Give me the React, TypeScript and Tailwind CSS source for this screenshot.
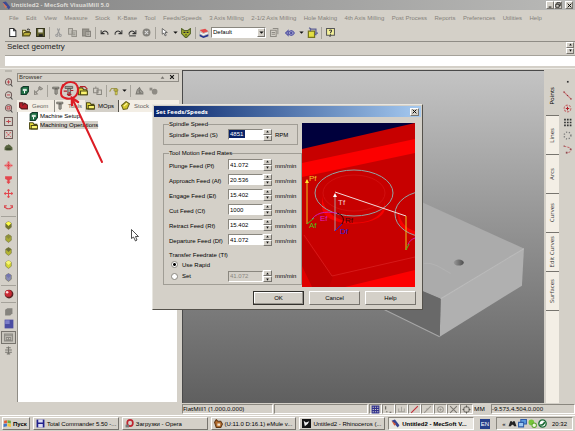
import type { ReactNode } from "react";

const raised = "border border-t-white border-l-white border-r-[#77746e] border-b-[#77746e]";
const sunken = "border border-t-[#8a877f] border-l-[#8a877f] border-r-white border-b-white";

const menus = [
  "File", "Edit", "View", "Measure", "Stock", "K-Base", "Tool", "Feeds/Speeds", "3 Axis Milling", "2-1/2 Axis Milling",
  "Hole Making", "4th Axis Milling", "Post Process", "Reports", "Preferences", "Utilities", "Help",
];

const feeds = [
  { id: "pf", label: "Plunge Feed (Pf)", value: "41.072" },
  { id: "af", label: "Approach Feed (Af)", value: "20.536" },
  { id: "ef", label: "Engage Feed (Ef)", value: "15.402" },
  { id: "cf", label: "Cut Feed (Cf)", value: "1000" },
  { id: "rf", label: "Retract Feed (Rf)", value: "15.402" },
  { id: "df", label: "Departure Feed (Df)", value: "41.072" },
];

function Icon({ children, className = "size-[9px]" }: { children: ReactNode; className?: string }) {
  return (
    <svg viewBox="0 0 16 16" fill="none" strokeWidth="1.8" className={`shrink-0 ${className}`} aria-hidden="true">
      {children}
    </svg>
  );
}

function ToolButton({ label, children, className = "w-[14px]" }: { label: string; children: ReactNode; className?: string }) {
  return (
    <button type="button" aria-label={label} className={`flex shrink-0 items-center justify-center ${className}`}>
      {children}
    </button>
  );
}

function Separator() {
  return <span className="mr-px ml-[2px] h-3 w-px shrink-0 bg-[#a5a29a]" />;
}

function Caret() {
  return <Icon className="size-[5px]"><path d="M1 5h14l-7 7z" fill="#111" /></Icon>;
}

const undoPath = <path d="M2 4v6h6M3 10c3-6 8-6 11-1v3" />;
const redoPath = <path d="M14 4v6H8M13 10C10 4 5 4 2 9v3" />;

function MainToolbar() {
  return (
    <div className="flex h-[16px] items-center pl-[5px]">
      <ToolButton label="New"><Icon><path d="M3 1h7l4 4v10H3z" fill="#fff" stroke="#333" /><path d="M10 1v4h4" stroke="#333" /></Icon></ToolButton>
      <ToolButton label="Open"><Icon><path d="M1 14V4h5l1 2h6v3" fill="#f3e98a" stroke="#55501c" /><path d="M1 14 4 8h12l-3 6z" fill="#b8ac38" stroke="#55501c" /><path d="M9 3c2-2 4-1 5 1" stroke="#333" /></Icon></ToolButton>
      <ToolButton label="Save"><Icon><path d="M1 1h14v14H1z" fill="#65642f" stroke="#33331c" /><path d="M4 2h8v6H4z" fill="#dddbd0" /><path d="M5 11h7v4H5z" fill="#222" /></Icon></ToolButton>
      <Separator />
      <ToolButton label="Cut"><Icon><path d="M6 1l4 10M10 1 6 11" stroke="#999" /><circle cx="5" cy="13" r="2" stroke="#999" /><circle cx="11" cy="13" r="2" stroke="#999" /></Icon></ToolButton>
      <ToolButton label="Copy"><Icon><path d="M1 1h7v10H1zM7 5h8v10H7z" fill="#c7c4bc" stroke="#949189" /><path d="M9 9h4M9 12h4" stroke="#949189" /></Icon></ToolButton>
      <ToolButton label="Paste"><Icon><path d="M1 2h11v12H1z" fill="#9a978f" stroke="#85827b" /><path d="M7 6h8v9H7z" fill="#c7c4bc" stroke="#85827b" /><path d="M9 9h4M9 12h4" stroke="#85827b" /></Icon></ToolButton>
      <Separator />
      <ToolButton label="Undo"><Icon><g stroke="#333">{undoPath}</g></Icon></ToolButton>
      <ToolButton label="Redo"><Icon><g stroke="#333">{redoPath}</g></Icon></ToolButton>
      <ToolButton label="Repeat"><Icon><g stroke="#333">{redoPath}<path d="M2 14h12" /></g></Icon></ToolButton>
      <ToolButton label="Stop"><Icon><circle cx="8" cy="8" r="7" fill="#85837d" /><path d="m5 5 6 6M11 5l-6 6" stroke="#ddd" /></Icon></ToolButton>
      <Separator />
      <ToolButton label="Pick"><Icon><path d="M4 1v10l3-2 2 5 2-1-2-5h4z" fill="#fff" stroke="#444" strokeWidth="1.3" /></Icon></ToolButton>
      <ToolButton label="Pick options" className="w-[8px]"><Caret /></ToolButton>
      <ToolButton label="Filter"><Icon className="size-[10px]"><path d="M1 1l4 3h6l4-3v8l-6 6H7L1 9z" fill="#a9b32c" stroke="#55652a" /><path d="M4 7h3M9 7h3M8 10v2" stroke="#223" /></Icon></ToolButton>
      <Separator />
      <ToolButton label="Layers"><Icon className="size-[10px]"><path d="M1 3l9-2 5 4-8 3z" fill="#e34b4b" /><path d="M1 6l6 3 8-3v3l-8 3-6-3z" fill="#fff" stroke="#888" strokeWidth=".6" /><path d="M1 10l6 3 8-3v3l-8 3-6-3z" fill="#26348e" /></Icon></ToolButton>
      <div className={`relative flex h-[11px] w-[55px] shrink-0 bg-white ${sunken}`}>
        <select aria-label="Layer" className="w-full appearance-none bg-transparent pl-px text-[6px] leading-[9px] text-black outline-none">
          <option>Default</option>
        </select>
        <span className={`pointer-events-none absolute inset-y-0 right-0 flex w-[8px] items-center justify-center bg-[#d4d0c8] ${raised}`}><Caret /></span>
      </div>
      <ToolButton label="Properties" className="w-[16px]"><Icon><path d="M1 4h10v11H1z" stroke="#8e8b84" /><path d="M5 1h9v10M3 8h6M3 11h6" stroke="#8e8b84" /></Icon></ToolButton>
      <ToolButton label="Show" className="w-[16px]"><Icon className="size-[10px]"><path d="M1 8l4-4v8zM5 8c3-5 7-5 10 0-3 5-7 5-10 0z" fill="#b4b5d9" stroke="#5a5aa5" /><circle cx="10" cy="8" r="2" fill="#5050a0" /></Icon></ToolButton>
      <ToolButton label="Show options" className="w-[7px]"><Caret /></ToolButton>
      <ToolButton label="Bounding box"><Icon className="size-[11px]"><path d="M2 6h9v9H2z" fill="#e4e044" stroke="#77751c" /><path d="M5 6V3h8v8h-2M3 1l3 2M12 9h4" stroke="#5d5f94" /></Icon></ToolButton>
      <Separator />
      <ToolButton label="Help"><Icon><path d="M1 1h14v12H9l-2 2v-2H1z" fill="#f4f09a" stroke="#555" /><path d="M6 5c0-2 4-2 4 0S8 7 8 9M8 10v2" stroke="#333" /></Icon></ToolButton>
    </div>
  );
}

function zoomIcon(inner: ReactNode) {
  return <Icon><circle cx="8" cy="7" r="5.5" stroke="#6d5a58" /><path d="m12 11 3 4" stroke="#444" /><g stroke="#c0454d">{inner}</g></Icon>;
}

function gem(top: string, bottom: string) {
  return <Icon><path d="M8 1l5 3v7l-5 4-5-4V4z" fill={bottom} stroke="#6c6c48" strokeWidth="1" /><path d="M8 1l5 3-5 5-5-5z" fill={top} /></Icon>;
}

const viewTools: { name: string; icon: ReactNode }[][] = [
  [
    { name: "Zoom in", icon: zoomIcon(<path d="M5 7h6M8 4v6" />) },
    { name: "Zoom out", icon: zoomIcon(<path d="M5 7h6" />) },
    { name: "Zoom window", icon: zoomIcon(<path d="M5.500 5h5v4h-5z" />) },
    { name: "Zoom extents", icon: <Icon><path d="M1 1h14v14H1z" stroke="#6d5a58" /><path d="M4 8h8M8 5v6" stroke="#c0454d" /></Icon> },
    { name: "Zoom selected", icon: <Icon><path d="M1 1h14v14H1z" stroke="#6d5a58" /><path d="m4 4 8 8M12 4l-8 8" stroke="#d04b52" strokeDasharray="3 2" /></Icon> },
    { name: "Home view", icon: <Icon><path d="M1 8l3-4h2l2-2 3 2 4 4v5H1z" fill="#57633f" /><path d="M4 9h8v4H4z" fill="#3d4a2c" /></Icon> },
  ],
  [
    { name: "Pan", icon: <Icon><path d="M8 1v14M1 8h14" stroke="#e3474d" strokeWidth="3" /><path d="M5 4h6M5 12h6M4 5v6M12 5v6" stroke="#ef7b7f" /></Icon> },
    { name: "Zoom", icon: <Icon><path d="M2 2h12v5l-4 2v3h2l-4 4-4-4h2V9L2 7z" fill="#e3474d" /></Icon> },
    { name: "Move", icon: <Icon><path d="M8 1v14M1 8h14M6 3l2-2 2 2M6 13l2 2 2-2M3 6 1 8l2 2M13 6l2 2-2 2" stroke="#e3474d" /></Icon> },
    { name: "Rotate", icon: <Icon><path d="M2 5c-2 7 14 7 12 0M1 9V5h4M15 9V5h-4" stroke="#d9484e" /></Icon> },
  ],
  [
    { name: "Top", icon: gem("#ffff4a", "#73752a") },
    { name: "Front", icon: gem("#8c8d3d", "#a9aa35") },
    { name: "Right", icon: gem("#6d6f38", "#b5b532") },
    { name: "Isometric", icon: gem("#f7f772", "#d5d533") },
    { name: "Shaded view", icon: gem("#7476b0", "#8a8cb5") },
  ],
  [{ name: "Render", icon: <Icon className="size-[10px]"><circle cx="8" cy="8" r="7" fill="#592222" /><circle cx="7" cy="7" r="5.500" fill="#c92b35" /><circle cx="5" cy="5" r="2" fill="#ffd8d8" /></Icon> }],
  [
    { name: "Stock", icon: <Icon><path d="M2 5l4-3h9v9l-4 4H2z" fill="#85837d" /></Icon> },
    { name: "Part", icon: <Icon className="size-[10px]"><path d="M1 1h14v14H1z" fill="#4b4da2" /><path d="M2 2h7v6H2z" fill="#7c7ec8" /></Icon> },
    { name: "Wireframe", icon: <Icon><path d="M1 2h14v12H1zM1 5h14M4 8h8v4H4zM8 8v4" stroke="#8b8983" /></Icon> },
    { name: "Tool display", icon: <Icon><path d="M8 1v14M4 3h8M2 7h12M2 11h12M5 14h6" stroke="#77756f" /></Icon> },
  ],
];

const groupGap = ["", "mt-[5px]", "mt-px border-t border-[#a5a29a] pt-[2px]", "mt-px border-t border-[#a5a29a] pt-[2px]", "mt-px border-t border-[#a5a29a] pt-[2px]"];

function ViewToolbar() {
  return (
    <div className="flex w-[17px] shrink-0 flex-col px-px pt-px">
      <span className="mx-1 mb-1 h-[2px] border-y border-[#b9b6ae]" />
      {viewTools.map((group, i) => (
        <div key={i} className={groupGap[i]}>
          {group.map((t) => (
            <button
              key={t.name}
              type="button"
              aria-label={t.name}
              className={`flex w-full items-center justify-center ${i === 1 ? "h-[14px]" : "h-[13px]"} ${t.name === "Wireframe" ? "border border-[#77746e] bg-[#c8c5bd]" : ""}`}
            >
              {t.icon}
            </button>
          ))}
        </div>
      ))}
    </div>
  );
}

const folder = <><path d="M1 3h6l2 3h5v8H1z" fill="#e7dd3c" stroke="#4d4a14" /><path d="M4 14V8h11v6z" fill="#faf36e" stroke="#4d4a14" /></>;
const machine = <><path d="M2 4l4-3h9v9l-4 5H2z" fill="#1e7044" stroke="#12382a" /><path d="M5 5h7v4H5z" fill="#d7e6dc" /><path d="M8 9v4" stroke="#fff" /></>;
const cutter = <><path d="M3 2h11v3H3zM7 5h4v9l-2 1-2-1z" fill="#a4a29b" stroke="#55534e" strokeWidth="1.2" /></>;

function Browser() {
  const tab = "flex items-center gap-1 text-[#66635d]";
  return (
    <section className="flex w-[162px] shrink-0 flex-col pt-[4px]">
      <header className="flex h-[9px] items-center border border-[#8f8c85] pl-px text-[6px] leading-[7px]">
        <h2 className="grow font-['Noto_Sans']">Browser</h2>
        <button type="button" aria-label="Collapse" className="w-[9px]"><Icon className="size-[5px]"><path d="M8 4l6 8H2z" fill="#77746e" /></Icon></button>
        <button type="button" aria-label="Close browser" className="w-[9px]"><Icon className="size-[6px]"><path d="m3 3 10 10M13 3 3 13" stroke="#111" strokeWidth="3" /></Icon></button>
      </header>
      <div className="flex h-[18px] shrink-0 items-center">
        <ToolButton label="Machine"><Icon>{machine}</Icon></ToolButton>
        <ToolButton label="Post"><Icon><path d="M1 15V9l5 5zM4 11l8-8M10 1l5 4-3 2-4-3z" stroke="#8a8780" /></Icon></ToolButton>
        <Separator />
        <ToolButton label="Create tool" className="w-[12px]"><Icon className="h-[11px] w-[9px]">{cutter}</Icon></ToolButton>
        <ToolButton label="Set feeds and speeds" className="w-[15px]"><Icon className="size-[11px]">{cutter}<path d="M1 9h5M11 8h4M9 10v5M6 13l3 3 3-3" stroke="#b3202a" /></Icon></ToolButton>
        <ToolButton label="Clearance"><Icon className="size-[10px]">{folder}<path d="M3 1h8l4 4" stroke="#b3202a" /></Icon></ToolButton>
        <ToolButton label="Copy operation"><Icon><path d="M1 4h8v8H1zM7 7h8v8H7zM5 1v3" stroke="#8a8780" /></Icon></ToolButton>
        <Separator />
        <ToolButton label="Operations" className="w-[12px]"><Icon className="size-[10px]"><path d="M1 9l3-5h8v8" stroke="#a19a52" /><path d="M8 5h6v3H8zM10 8h3v6h-3z" fill="#e6dd55" stroke="#7b752a" strokeWidth="1" /></Icon></ToolButton>
        <ToolButton label="Operation options" className="w-[8px]"><Caret /></ToolButton>
        <Separator />
        <ToolButton label="Simulate"><Icon><path d="M2 14l2-7 4-4 2 4 4 4v3zM6 8l5 5M8 6v7" fill="#a4a29b" stroke="#7d7b75" /></Icon></ToolButton>
        <ToolButton label="Post process"><Icon><path d="M1 3h5v5H1z" fill="#8e8b84" /><circle cx="10" cy="10" r="5" fill="#8e8b84" /></Icon></ToolButton>
      </div>
      <div role="tablist" className="flex h-[12px] shrink-0 items-stretch bg-[#f3eee5] text-[6px] leading-[10px]">
        <button type="button" role="tab" aria-selected="false" className={`w-[37px] pl-[2px] ${tab}`}><Icon><path d="M1 3h6v4l3-3 5 3v7H5l-4-3z" fill="#b3202a" stroke="#571a1d" /></Icon>Geom</button>
        <button type="button" role="tab" aria-selected="false" className={`w-[31px] border-l border-[#8f8c85] ${tab}`}><Icon>{cutter}</Icon>Tools</button>
        <button type="button" role="tab" aria-selected="true" className="flex w-[34px] items-center gap-[3px] border-r border-[#55524c] bg-[#d4d0c8] pl-px text-black"><Icon>{folder}</Icon>MOps</button>
        <button type="button" role="tab" aria-selected="false" className={`pl-[2px] ${tab}`}><Icon><path d="M1 8l8-7 6 4-4 9-7 1z" fill="#d3c62a" stroke="#65601b" /><path d="M5 9l6-5" stroke="#fff69a" /></Icon>Stock</button>
      </div>
      <ul role="tree" className="mr-[2px] mb-[13px] grow border-l border-[#8f8c85] bg-white pl-[11px] text-[6px] leading-[9px] text-black">
        <li role="treeitem" className="flex h-[9px] items-center gap-[2px]"><Icon>{machine}</Icon><span>Machine Setup</span></li>
        <li role="treeitem" className="flex h-[9px] items-center gap-[2px]"><Icon>{folder}</Icon><span className="bg-[#d4d0c8] leading-[8px]">Machining Operations</span></li>
      </ul>
    </section>
  );
}

function Scene() {
  return (
    <svg viewBox="0 0 360 333" preserveAspectRatio="xMidYMid slice" className="block size-full" role="img" aria-label="Stock model">
      <defs>
        <linearGradient id="sky" x1="0" y1="0" x2="0" y2="1">
          <stop offset="0" stopColor="#c4c4c4" />
          <stop offset=".5" stopColor="#909090" />
          <stop offset="1" stopColor="#5f5f5f" />
        </linearGradient>
        <linearGradient id="hole"><stop offset="0" stopColor="#999" /><stop offset="1" stopColor="#4e4e4e" /></linearGradient>
      </defs>
      <path d="M0 0h360v333H0z" fill="url(#sky)" />
      <path d="M160 110l79 22 101 46-83 50-97-40z" fill="#ababab" />
      <path d="M340 178l-2 37-82 51 1-38z" fill="#b0b0b0" />
      <path d="M257 228l-1 38-55-27V204z" fill="#696969" />
      <path d="M257 228l83-50" stroke="#bcbcbc" />
      <path d="M201 239l55 27" stroke="#a7a7a7" />
      <path d="M240 193c9-2 17 4 27 10" fill="none" stroke="#b2b2b2" />
      <ellipse cx="275" cy="192" rx="5" ry="3" fill="url(#hole)" />
    </svg>
  );
}

function PointTools() {
  return (
    <div className="flex w-[16px] shrink-0 flex-col pt-[5px]">
      <ToolButton label="Point" className="h-[14px]"><Icon><path d="M7 7h3v3H7z" fill="#333" /></Icon></ToolButton>
      <ToolButton label="Points on line" className="h-[13px]"><Icon><path d="M1 1l14 14" stroke="#c97878" /><path d="M1 1h2v2H1zM7 7h2v2H7zM13 13h2v2h-2z" fill="#8f2c35" /></Icon></ToolButton>
      <ToolButton label="Centre point" className="h-[14px]"><Icon><circle cx="8" cy="8" r="6" stroke="#c46a6c" strokeDasharray="4 2" /><path d="M8 5v6M5 8h6" stroke="#b3202a" /></Icon></ToolButton>
      <ToolButton label="Point grid" className="h-[13px]"><Icon><path d="M2 3h13M2 8h13M2 13h13" stroke="#333" strokeWidth="3" strokeDasharray="3 2" /></Icon></ToolButton>
      <ToolButton label="Points on circle" className="h-[14px]"><Icon><circle cx="8" cy="8" r="6" stroke="#777" strokeWidth="2.500" strokeDasharray="2 3" /></Icon></ToolButton>
      <ToolButton label="Points on curve" className="h-[13px]"><Icon><path d="M2 2l10 3c5 4 1 9-6 9" stroke="#c46a6c" strokeDasharray="4 2" /><path d="M1 1h2v2H1zM12 6h3v3h-3zM5 12h3v3H5z" fill="#8f4a50" /></Icon></ToolButton>
    </div>
  );
}

function GeometryTabs() {
  const names = ["Points", "Lines", "Arcs", "Curves", "Edit Curves", "Surfaces"];
  return (
    <div className="ml-[2px] flex w-[13px] shrink-0 flex-col bg-[#f3eee5] font-['Noto_Sans'] text-[6px]">
      <span className="h-[7px] bg-[#d4d0c8]" />
      <div role="tablist" className="flex flex-col">
        {names.map((name, i) => (
          <button
            key={name}
            type="button"
            role="tab"
            aria-selected={i === 0}
            className={`flex h-[39px] items-center justify-center border-b border-[#77746e] ${i === 0 ? "bg-[#d4d0c8] text-black" : "text-[#44423d]"}`}
          >
            <span className="rotate-180 whitespace-nowrap [writing-mode:vertical-rl]">{name}</span>
          </button>
        ))}
      </div>
    </div>
  );
}

function StatusBar() {
  const snap = `flex w-[13px] shrink-0 items-center justify-center ${sunken}`;
  return (
    <div className="flex h-[10px] shrink-0 gap-px font-['Noto_Sans'] text-[6px] leading-[8px] text-black">
      <span className={`w-[91px] shrink-0 ${sunken}`}>FlatMill1 (1.000,0.000)</span>
      <span className={`grow ${sunken}`} />
      <div className="flex">
        <button type="button" aria-label="Grid snap" className={snap}><Icon><path d="M2 2h12v12H2zM6 2v12M10 2v12M2 6h12M2 10h12" stroke="#30308c" /></Icon></button>
        <button type="button" aria-label="Ortho" className={snap}><Icon><path d="M3 2v6M4 12h2M10 13h3" stroke="#55534e" /></Icon></button>
        <button type="button" aria-label="Perpendicular" className={snap}><Icon><path d="M8 3v9M3 6v6h10V6" stroke="#a4a29b" /></Icon></button>
        <button type="button" aria-label="End snap" className={snap}><Icon><path d="M2 14 14 2" stroke="#c22b36" /></Icon></button>
        <button type="button" aria-label="Mid snap" className={snap}><Icon><path d="M2 14 14 2M6 7h4" stroke="#99968f" /></Icon></button>
        <button type="button" aria-label="Centre snap" className={snap}><Icon><circle cx="8" cy="8" r="5" stroke="#99968f" /><path d="M8 6v4M6 8h4" stroke="#99968f" /></Icon></button>
        <button type="button" aria-label="Intersection snap" className={snap}><Icon><path d="m2 2 12 12M14 2 2 14" stroke="#77746e" /></Icon></button>
        <button type="button" aria-label="Quadrant snap" className={snap}><Icon><circle cx="8" cy="8" r="5" stroke="#77746e" /><path d="M8 1v3M8 12v3M1 8h3M12 8h3" stroke="#55534e" /></Icon></button>
        <span className="w-[17px] pl-px leading-[10px]">MM</span>
      </div>
      <span className={`w-[84px] shrink-0 ${sunken}`}>-9.573,4.504,0.000</span>
    </div>
  );
}

function Spinner({ label }: { label: string }) {
  const half = `flex h-[6px] w-[9px] items-center justify-center bg-[#d4d0c8] ${raised}`;
  return (
    <span className="flex flex-col">
      <button type="button" aria-label={`Increase ${label}`} className={half}><Icon className="size-[3px]"><path d="M8 2l7 11H1z" fill="#111" /></Icon></button>
      <button type="button" aria-label={`Decrease ${label}`} className={half}><Icon className="size-[3px]"><path d="M1 3h14L8 14z" fill="#111" /></Icon></button>
    </span>
  );
}

function FeedRow({ id, label, value }: { id: string; label: string; value: string }) {
  return (
    <div className="flex h-[15px] items-center">
      <label htmlFor={id} className="w-[59px] shrink-0 pt-[3px]">{label}</label>
      <input id={id} defaultValue={value} className={`h-[11px] w-[35px] bg-white px-px text-[6px] leading-[8px] ${sunken}`} />
      <Spinner label={label} />
      <span className="ml-[3px] pt-[3px] whitespace-nowrap">mm/min</span>
    </div>
  );
}

function FeedDiagram() {
  return (
    <svg viewBox="0 0 113 164" preserveAspectRatio="xMidYMid slice" className="block h-[164px] min-w-0 grow" role="img" aria-label="Feed rate diagram">
      <path d="M0 0h113v164H0z" fill="#c70000" />
      <path d="M0 0h113L0 26z" fill="#00003c" />
      <path d="M0 40l113-24v14L0 54zM43 164l70-17v17z" fill="#fc0000" />
      <path d="M0 112l31 42-4 10H10L0 143z" fill="#bd0000" />
      <path d="M0 143v21h10z" fill="#e00000" />
      <path d="M2 112l28 41 83-19" fill="none" stroke="#d92020" strokeWidth=".8" />
      <path d="M20 71c0 36 63 38 63 6v8c-1 20-62 22-63-1z" fill="#f80000" />
      <ellipse cx="52" cy="70" rx="31" ry="18" fill="#c70000" stroke="#d51515" strokeWidth=".7" />
      <path d="M96 88c3 14 10 18 17 20v5c-12-4-18-12-17-25z" fill="#f80000" />
      <ellipse cx="52" cy="70" rx="39" ry="23" fill="none" stroke="#91a5a5" />
      <ellipse cx="125" cy="91" rx="32" ry="23" fill="none" stroke="#91a5a5" />
      <path d="M33 69l71 24" stroke="#f2dada" />
      <path d="M33 72v36" stroke="#a99" />
      <path d="M31 74l2-4 2 4z" fill="#fff" />
      <path d="M104 93v34M5 101V57" stroke="#e9c31c" />
      <path d="M3 60l2-4 2 4z" fill="#ffe52c" />
      <path d="M10 96c6-8 18-8 28-5M106 122c1-4 4-6 7-7" fill="none" stroke="#d01fb4" />
      <path d="M5 101l7-6M104 127l3-6" stroke="#45c31c" />
      <path d="M35 90c6 2 8 6 5 11" fill="none" stroke="#300" />
      <path d="M33 108l7-7" stroke="#2020d5" />
      <g fontFamily="Liberation Sans, sans-serif" fontSize="8">
        <text x="7" y="58" fill="#f1c72c">Pf</text>
        <text x="36" y="82" fill="#f0caca">Tf</text>
        <text x="18" y="98" fill="#e01fc4">Ef</text>
        <text x="7" y="105" fill="#4fbf1c">Af</text>
        <text x="43" y="100" fill="#400808">Rf</text>
        <text x="38" y="111" fill="#2222dd">Df</text>
      </g>
    </svg>
  );
}

function FeedsDialog() {
  const button = `h-[14px] w-[51px] text-center text-[6px] leading-[12px] bg-[#d4d0c8] ${raised}`;
  const radio = "size-[7px] shrink-0 appearance-none rounded-full border border-[#8a877f] bg-white checked:bg-[radial-gradient(circle,#000_35%,#fff_45%)]";
  const group = "border border-[#a09d95] px-[5px]";
  return (
    <div role="dialog" aria-labelledby="feeds-title" className="absolute top-[104px] left-[152px] w-[271px] border border-t-[#e8e6e0] border-l-[#e8e6e0] border-r-[#55524c] border-b-[#55524c] bg-[#d4d0c8] p-px text-[6px] leading-[8px] text-black">
      <header className="flex h-[11px] items-center bg-linear-to-r from-[#0a246a] to-[#a6caf0] px-[2px]">
        <h2 id="feeds-title" className="grow font-['Noto_Sans'] text-[6px] font-bold text-white">Set Feeds/Speeds</h2>
        <button type="button" aria-label="Close" className={`flex h-[8px] w-[9px] items-center justify-center bg-[#d4d0c8] ${raised}`}><Icon className="size-[5px]"><path d="m2 2 12 12M14 2 2 14" stroke="#000" strokeWidth="3" /></Icon></button>
      </header>
      <form className="px-[5px] pb-[3px]">
        <div className="flex gap-1 pr-px pl-1 pt-[3px]">
          <div className="flex w-[135px] shrink-0 flex-col gap-1">
            <fieldset className={`h-[25px] ${group}`}>
              <legend>Spindle Speed</legend>
              <div className="flex h-[13px] items-center">
                <label htmlFor="spindle" className="w-[59px] shrink-0">Spindle Speed (S)</label>
                <span className={`h-[11px] w-[35px] bg-white ${sunken}`}>
                  <input id="spindle" defaultValue="4851" className="block h-[8px] w-[16px] bg-[#0a246a] px-px text-[6px] leading-[8px] text-white outline-none" />
                </span>
                <Spinner label="spindle speed" />
                <span className="ml-[3px]">RPM</span>
              </div>
            </fieldset>
            <fieldset className={`pb-[2px] ${group}`}>
              <legend>Tool Motion Feed Rates</legend>
              {feeds.map((f) => <FeedRow key={f.id} {...f} />)}
              <div role="radiogroup" aria-labelledby="transfer">
                <p id="transfer" className="pt-1">Transfer Feedrate (Tf)</p>
                <label className="flex h-[11px] items-center gap-1 pl-[2px]">
                  <input type="radio" name="transfer" defaultChecked className={radio} />Use Rapid
                </label>
                <div className="flex h-[12px] items-center">
                  <label className="flex w-[59px] shrink-0 items-center gap-1 pl-[2px]">
                    <input type="radio" name="transfer" className={radio} />Set
                  </label>
                  <input aria-label="Transfer feedrate" disabled defaultValue="41.072" className={`h-[11px] w-[35px] bg-[#d4d0c8] px-px text-[6px] leading-[8px] text-[#8a877f] ${sunken}`} />
                  <Spinner label="transfer feedrate" />
                  <span className="ml-[3px]">mm/min</span>
                </div>
              </div>
            </fieldset>
          </div>
          <div className="flex min-w-0 grow pt-[3px]"><FeedDiagram /></div>
        </div>
        <div className="mt-1 flex justify-end gap-[5px]">
          <button type="submit" className="h-[14px] w-[51px] border border-[#33312d] bg-[#d4d0c8] text-center text-[6px] leading-[12px] shadow-[inset_-1px_-1px_#99968f,inset_1px_1px_#fff]">OK</button>
          <button type="button" className={button}>Cancel</button>
          <button type="button" className={button}>Help</button>
        </div>
      </form>
    </div>
  );
}

function Taskbar() {
  const task = "flex min-w-0 flex-1 items-center gap-[2px] px-[2px]";
  return (
    <footer className="flex h-[16px] shrink-0 items-stretch gap-[3px] border-t border-white px-[2px] py-px text-[6px] leading-[10px] whitespace-nowrap text-black">
      <button type="button" className={`flex w-[28px] shrink-0 items-center gap-px font-bold ${raised}`}>
        <Icon><path d="M2 3l5-1v5l-5 1z" fill="#e25a35" /><path d="M8 2l6 1v5l-6-1z" fill="#6aa63a" /><path d="M1 9l6-1v5l-6 1z" fill="#3f74c9" /><path d="M8 8l6 1v5l-6-1z" fill="#f0c538" /></Icon>Пуск
      </button>
      <button type="button" className={`${task} ${raised}`}>
        <Icon><path d="M1 1h14v14H1z" fill="#20208c" /><path d="M4 1h8v5H4zM4 9h8v6H4z" fill="#dcdcf2" /></Icon><span>Total Commander 5.50 -...</span>
      </button>
      <button type="button" className={`${task} ${raised}`}>
        <Icon><ellipse cx="9" cy="7" rx="5" ry="5.500" stroke="#bd2530" strokeWidth="3" /><path d="M1 10h6v5H1z" fill="#777" /></Icon><span>Загрузки - Opera</span>
      </button>
      <button type="button" className={`${task} ${raised}`}>
        <Icon><path d="M1 6l3-5 3 3h5l3 5-3 6H4z" fill="#b26b2c" stroke="#5e3514" /><path d="M6 8h5v4H6z" fill="#f4e4cd" /></Icon><span>(U:11.0 D:16.1) eMule v...</span>
      </button>
      <button type="button" className={`${task} ${raised}`}>
        <Icon><path d="M0 0h16v16H0z" fill="#111" /><path d="M3 3l4 3 6-2-3 5-5 4z" fill="#eee" /></Icon><span>Untitled2 - Rhinoceros (...</span>
      </button>
      <button type="button" className={`${task} bg-[#e9e7e1] font-bold ${sunken}`}>
        <Icon><path d="M1 3l6-2 8 10-3 4z" fill="#35428f" /><path d="M1 3l5 9 3-3z" fill="#d25a3c" /></Icon><span>Untitled2 - MecSoft V...</span>
      </button>
      <span className="mx-[3px] flex w-[10px] shrink-0 items-center justify-center self-center bg-[#26408b] text-white">EN</span>
      <div className={`flex w-[77px] shrink-0 items-center gap-px pl-1 ${sunken}`}>
        <button type="button" aria-label="Show hidden icons" className="w-[6px]">«</button>
        <Icon><path d="M1 13 4 4h3l1 2 1-2h3l3 9h-4l-2-3H7l-2 3z" fill="#222" /></Icon>
        <Icon><path d="M5 1h10v8H5z" fill="#5a9be0" stroke="#2d5ca8" /><path d="M1 6h9v8H1z" fill="#9cc8f2" stroke="#2d5ca8" /></Icon>
        <Icon><circle cx="6" cy="6" r="5" fill="#77c53c" /><circle cx="11" cy="11" r="4" fill="#eef7e0" stroke="#5ba52b" /></Icon>
        <Icon><circle cx="8" cy="8" r="6.500" fill="#fff" stroke="#1d6b35" strokeWidth="2.500" /><path d="M4 10c3 2 7-1 8-5" stroke="#1d6b35" strokeWidth="3" /></Icon>
        <time className="ml-1">20:32</time>
      </div>
    </footer>
  );
}

export default function App() {
  const caption = `flex h-[8px] w-[8px] items-center justify-center bg-[#d4d0c8] ${raised}`;
  return (
    <div className="relative flex h-screen flex-col overflow-hidden bg-[#d4d0c8] font-['Liberation_Sans',sans-serif] text-[#33312d]">
      <header className="flex h-[10px] shrink-0 items-center bg-linear-to-r from-[#858585] to-[#b9b9b7] pr-[2px] pl-[2px]">
        <Icon><path d="M1 2l6-1 8 10-3 4z" fill="#3d4a93" /><path d="M1 2l5 11 3-3z" fill="#d9765c" /></Icon>
        <h1 className="grow font-['Noto_Sans'] text-[6px] leading-[8px] font-bold text-[#dcdad5]">Untitled2 - MecSoft VisualMill 5.0</h1>
        <button type="button" aria-label="Minimize" className={caption}><Icon className="size-[5px]"><path d="M2 13h9" stroke="#000" strokeWidth="3" /></Icon></button>
        <button type="button" aria-label="Restore" className={caption}><Icon className="size-[6px]"><path d="M5 5V2h9v8h-3M2 6h9v8H2z" stroke="#000" strokeWidth="2" /></Icon></button>
        <button type="button" aria-label="Close window" className={`ml-[3px] ${caption}`}><Icon className="size-[5px]"><path d="m2 2 12 12M14 2 2 14" stroke="#000" strokeWidth="3" /></Icon></button>
      </header>
      <nav className="flex h-[15px] shrink-0 items-center justify-between pt-px pr-[33px] pl-[9px] text-[6px] whitespace-nowrap text-[#85827b]">
        {menus.map((m) => <button key={m} type="button">{m}</button>)}
      </nav>
      <MainToolbar />
      <div className="ml-[5px] shrink-0 border-t border-[#8f8c85]">
        <div className="flex h-[13px] items-start">
          <label htmlFor="prompt" className="grow pl-[2px] text-[8px] leading-[9px] text-[#222]">Select geometry</label>
          <div className="flex flex-col pr-px">
            <button type="button" aria-label="Scroll up" className={`flex h-[6px] w-[8px] items-center justify-center ${raised}`}><Icon className="size-[3px]"><path d="M8 2l7 11H1z" fill="#111" /></Icon></button>
            <button type="button" aria-label="Scroll down" className={`flex h-[6px] w-[8px] items-center justify-center ${raised}`}><Icon className="size-[3px]"><path d="M1 3h14L8 14z" fill="#111" /></Icon></button>
          </div>
        </div>
        <input id="prompt" className="block h-[11px] w-full border-t border-[#a5a29a] bg-white px-1 text-[8px] outline-none" />
      </div>
      <main className="mt-[2px] flex min-h-0 grow border-t border-[#eceae4]">
        <ViewToolbar />
        <Browser />
        <div className="ml-[3px] flex min-w-0 grow flex-col pb-px">
          <div className="flex min-h-0 grow pt-px">
            <div className="min-h-0 min-w-0 grow border-t border-l border-[#4a4a4a]"><Scene /></div>
            <GeometryTabs />
            <PointTools />
          </div>
          <div className="h-px" />
          <StatusBar />
        </div>
      </main>
      <Taskbar />
      <FeedsDialog />
      <svg viewBox="0 0 52 90" fill="none" stroke="#dc1c24" strokeWidth="2" strokeLinecap="round" className="pointer-events-none absolute top-[80px] left-[58px] h-[90px] w-[52px]" aria-hidden="true">
        <path d="M4 8C8 0 19 0 20 9c0 9-8 11-13 9-5-1-5-7-2-13" />
        <path d="M14 18l30 64" />
        <path d="M14 25l0-7 6 4" strokeWidth="2.500" />
      </svg>
      <svg viewBox="0 0 8 13" className="pointer-events-none absolute top-[229px] left-[131px] h-[13px] w-[8px]" aria-hidden="true">
        <path d="M.5.5v9l2-1.500 2 4 1.500-1-1.500-3.500h3z" fill="#fff" stroke="#222" strokeWidth=".8" />
      </svg>
    </div>
  );
}
